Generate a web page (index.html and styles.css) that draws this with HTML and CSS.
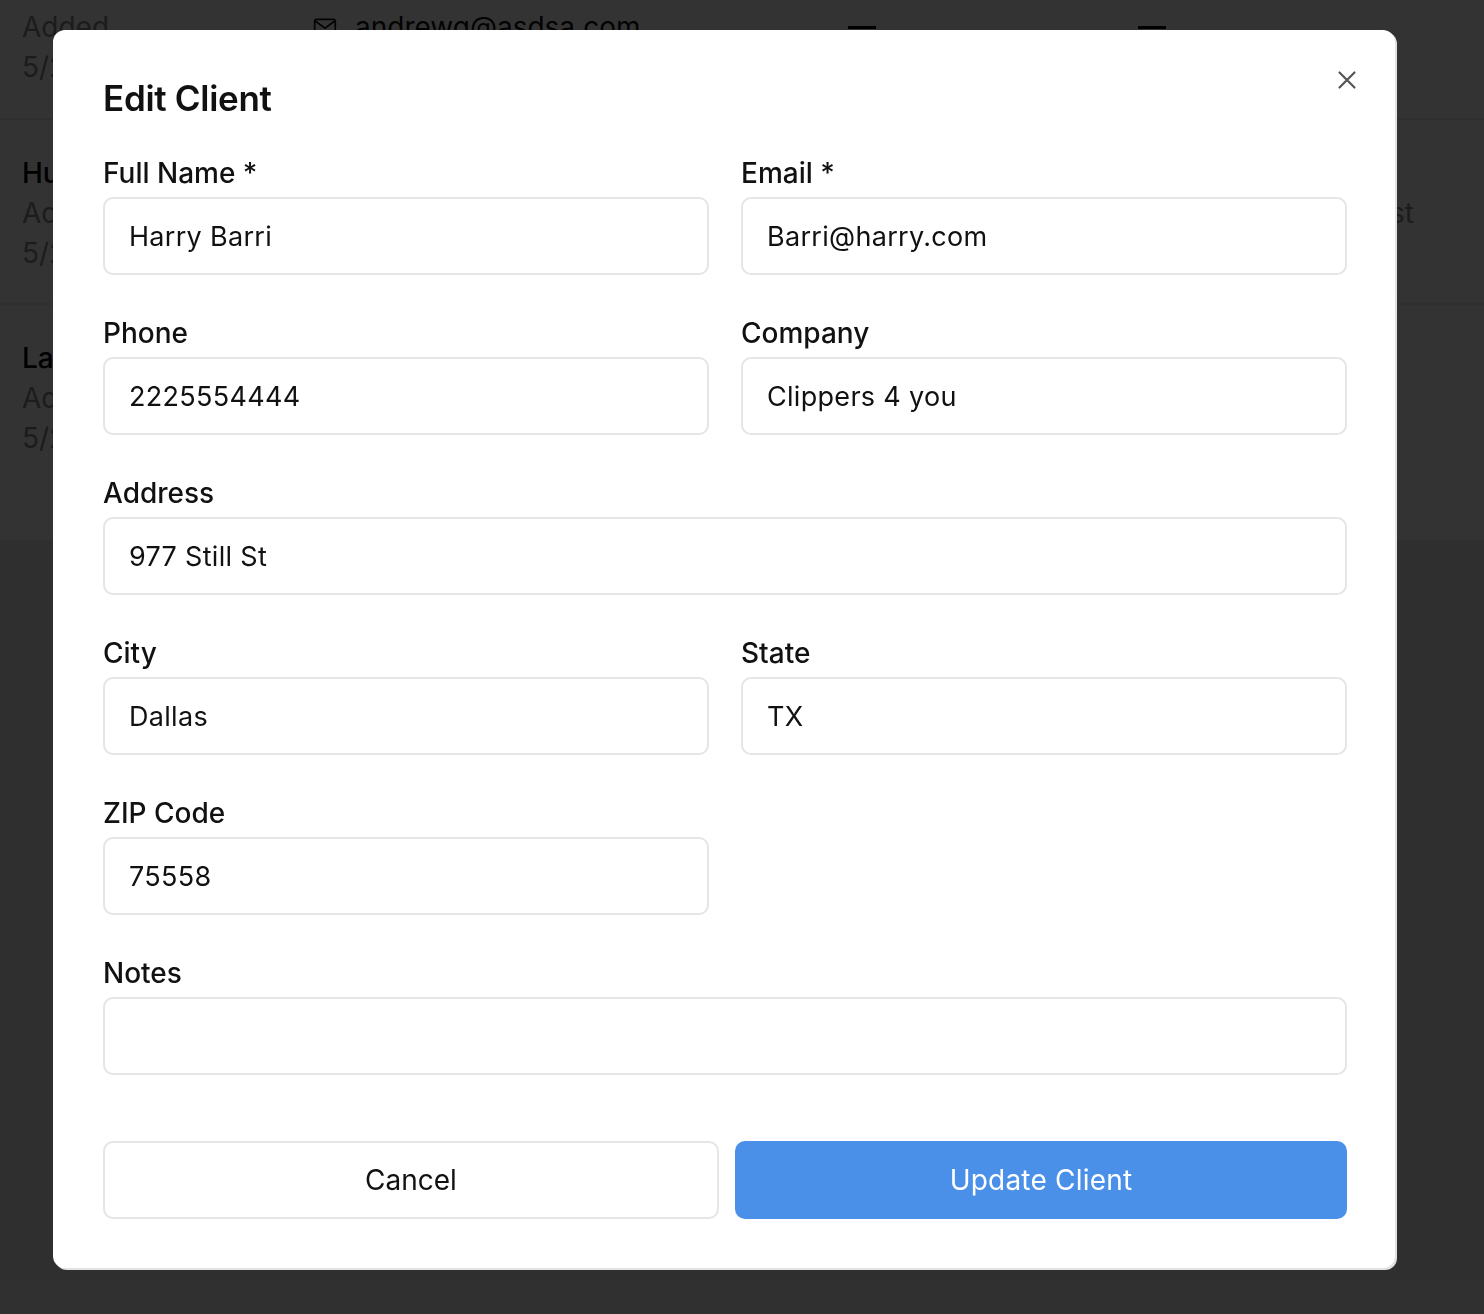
FILE: index.html
```html
<!DOCTYPE html>
<html lang="en">
<head>
<meta charset="utf-8">
<title>Edit Client</title>
<link rel="stylesheet" href="styles.css">
</head>
<body>
<div class="page">
  <div class="list">
    <div class="row row-first">
      <div class="col col-main">
        <div class="name">Andrew Gomez</div>
        <div class="muted">Added</div>
        <div class="muted">5/21/2025</div>
      </div>
      <div class="col col-contact">
        <div class="contact">
          <svg class="mail" viewBox="0 0 24 24" width="26" height="26"><rect x="2.5" y="5" width="19" height="14" rx="2" fill="none" stroke="#111" stroke-width="1.6"/><path d="M3 6.5l9 6.5 9-6.5" fill="none" stroke="#111" stroke-width="1.6"/></svg>
          <span>andrewg@asdsa.com</span>
        </div>
      </div>
      <div class="col col-a"><div class="dash"></div></div>
      <div class="col col-b"><div class="dash"></div></div>
    </div>
    <div class="row row-second">
      <div class="col col-main">
        <div class="name">Hunter Barri</div>
        <div class="muted">Added</div>
        <div class="muted">5/21/2025</div>
      </div>
      <div class="col col-end">
        <div class="muted spacer-line">&nbsp;</div>
        <div class="muted right-text">Contact list</div>
      </div>
    </div>
    <div class="row row-third">
      <div class="col col-main">
        <div class="name">Lance Miller</div>
        <div class="muted">Added</div>
        <div class="muted">5/20/2025</div>
      </div>
    </div>
  </div>
</div>

<div class="overlay">
  <div class="modal">
    <button class="close" aria-label="Close">
      <svg viewBox="0 0 24 24" width="24" height="24"><path d="M3 3L21 21M21 3L3 21" stroke="#555" stroke-width="2.6" stroke-linecap="round" fill="none"/></svg>
    </button>
    <h2 class="title">Edit Client</h2>
    <form class="form">
      <div class="grid">
        <div class="field">
          <label>Full Name *</label>
          <div class="input">Harry Barri</div>
        </div>
        <div class="field">
          <label>Email *</label>
          <div class="input">Barri@harry.com</div>
        </div>
        <div class="field">
          <label>Phone</label>
          <div class="input">2225554444</div>
        </div>
        <div class="field">
          <label>Company</label>
          <div class="input">Clippers 4 you</div>
        </div>
        <div class="field span2">
          <label>Address</label>
          <div class="input">977 Still St</div>
        </div>
        <div class="field">
          <label>City</label>
          <div class="input">Dallas</div>
        </div>
        <div class="field">
          <label>State</label>
          <div class="input">TX</div>
        </div>
        <div class="field">
          <label>ZIP Code</label>
          <div class="input">75558</div>
        </div>
        <div class="field empty"></div>
        <div class="field span2">
          <label>Notes</label>
          <div class="input"></div>
        </div>
      </div>
      <div class="actions">
        <button type="button" class="btn btn-cancel">Cancel</button>
        <button type="button" class="btn btn-primary">Update Client</button>
      </div>
    </form>
  </div>
</div>
</body>
</html>
```
FILE: styles.css
```css
* { box-sizing: border-box; }
html, body { margin: 0; padding: 0; }
body {
  font-family: Inter, "Noto Sans", "Liberation Sans", sans-serif;
  background: #eeeeee;
  width: 1484px;
  height: 1314px;
  overflow: hidden;
}
.page { width: 100%; height: 100%; background: #ececec; }
.list { background: #ffffff; }
.row {
  display: flex;
  border-bottom: 2px solid #e8e8e8;
  padding-left: 22px;
}
.row-first { height: 153px; margin-top: -33px; padding-top: 0; }
.row-second { height: 185px; padding-top: 33px; }
.row-third { height: 235px; padding-top: 33px; border-bottom: none; }
.col-main { width: 290px; }
.name { font-size: 28px; font-weight: 500; line-height: 40px; color: #000; }
.muted { font-size: 28px; line-height: 40px; color: #8a8a8a; }
.col-contact { width: 536px; padding-top: 40px; }
.contact { display: flex; align-items: center; gap: 17px; font-size: 28px; line-height: 40px; color: #111; }
.mail { flex: none; }
.col-a { width: 290px; padding-top: 59px; }
.col-b { width: 290px; padding-top: 59px; }
.dash { width: 28px; height: 3px; background: #000; }
.col-end { margin-left: auto; padding-right: 70px; }
.right-text { text-align: right; }

.overlay {
  position: fixed;
  inset: 0;
  background: rgba(0, 0, 0, 0.8);
  display: flex;
  align-items: flex-start;
  padding: 30px 0 0 53px;
}
.modal {
  position: relative;
  width: 1342px;
  background: #ffffff;
  border-radius: 12px;
  box-shadow: 2px 2px 0 0 #e2e2e2;
  padding: 46px 48px 49px 50px;
}
.close {
  position: absolute;
  top: 38px;
  right: 36px;
  width: 24px;
  height: 24px;
  padding: 0;
  border: none;
  background: none;
  display: flex;
}
.close svg { width: 20px; height: 20px; margin: 2px; }
.title {
  margin: 0 0 37px 0;
  font-size: 35px;
  line-height: 44px;
  font-weight: 600;
  color: #111;
  letter-spacing: -0.3px;
}
.grid {
  display: grid;
  grid-template-columns: 1fr 1fr;
  column-gap: 32px;
  row-gap: 42px;
}
.span2 { grid-column: span 2; }
.field { display: flex; flex-direction: column; gap: 8px; }
.field.empty { height: 118px; }
.field label {
  font-size: 28px;
  line-height: 32px;
  font-weight: 500;
  color: #111;
}
.input {
  height: 78px;
  border: 2px solid #e5e5e5;
  border-radius: 10px;
  padding: 0 24px;
  display: flex;
  align-items: center;
  font-size: 27px;
  color: #111;
  letter-spacing: 0.3px;
}
.actions {
  margin-top: 66px;
  display: flex;
  gap: 16px;
}
.btn {
  flex: 1;
  height: 78px;
  border-radius: 10px;
  font-family: Inter, "Noto Sans", "Liberation Sans", sans-serif;
  font-size: 28px;
  font-weight: 400;
}
.btn-cancel {
  background: #ffffff;
  border: 2px solid #e5e5e5;
  color: #111;
}
.btn-primary {
  background: #4a90e9;
  border: none;
  color: #ffffff;
  letter-spacing: 0.2px;
}
```
